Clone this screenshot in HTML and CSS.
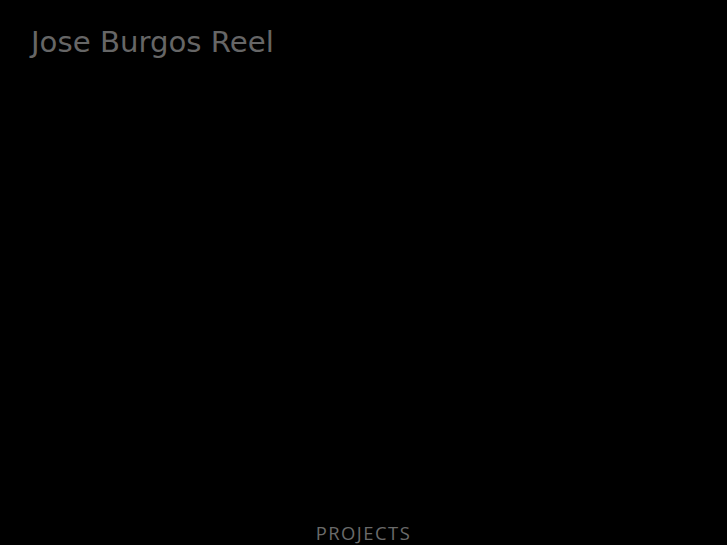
FILE: index.html
```html
<!DOCTYPE html>
<html>
<head>
<meta charset="utf-8">
<link rel="stylesheet" href="styles.css">
</head>
<body>
<header class="site-header">
  <h1 class="site-title">Jose Burgos Reel</h1>
</header>
<main class="stage"></main>
<nav class="site-nav">
  <a class="nav-link" href="#">PROJECTS</a>
</nav>
</body>
</html>
```
FILE: styles.css
```css
html, body {
  margin: 0;
  padding: 0;
  background: #000;
}
body {
  min-height: 545px;
  overflow: hidden;
}
.site-header {
  padding: 24px 31px 0;
}
.site-title {
  margin: 0;
  font-family: "DejaVu Sans", sans-serif;
  font-weight: normal;
  font-size: 29.2px;
  line-height: 36px;
  color: #666;
}
.stage {
  height: 461px;
}
.site-nav {
  display: flex;
  justify-content: center;
}
.nav-link {
  font-family: "Open Sans", sans-serif;
  font-size: 18.4px;
  letter-spacing: 1.5px;
  line-height: 24px;
  color: #6a6a6a;
  text-decoration: none;
}
```
